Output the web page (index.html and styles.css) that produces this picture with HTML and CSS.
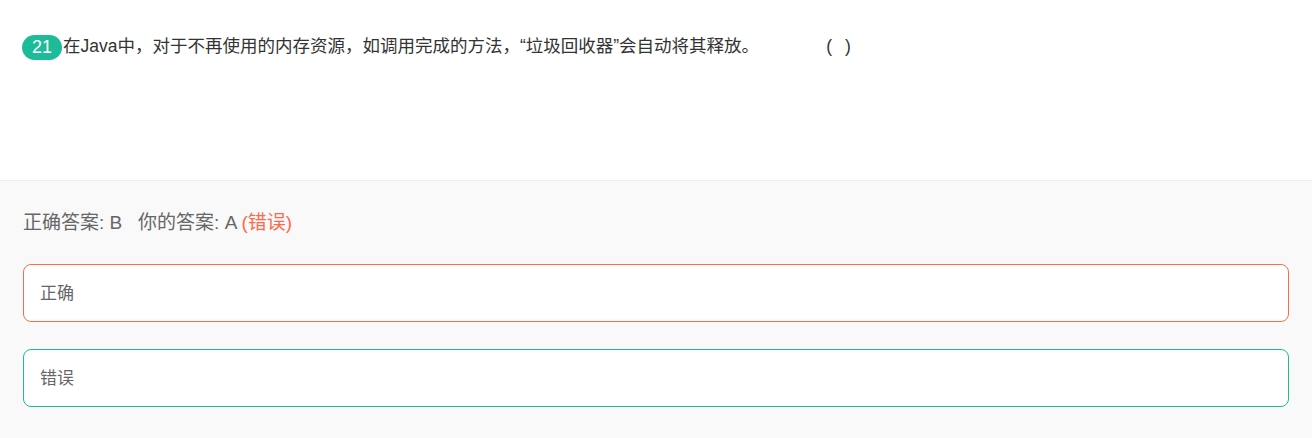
FILE: index.html
```html
<!DOCTYPE html>
<html lang="zh">
<head>
<meta charset="utf-8">
<link rel="stylesheet" href="styles.css">
</head>
<body>
<div class="question">
  <div class="stem"><span class="num">21</span><span class="title">在Java中，对于不再使用的内存资源，如调用完成的方法，“垃圾回收器”会自动将其释放。<span class="paren open">(</span><span class="paren close">)</span></span></div>
</div>
<div class="answer">
  <div class="result">正确答案: B&nbsp;&nbsp;&nbsp;你的答案: A <span class="wrong">(错误)</span></div>
  <div class="option opt-red">正确</div>
  <div class="option opt-green">错误</div>
</div>
</body>
</html>
```
FILE: styles.css
```css
html, body {
  margin: 0;
  padding: 0;
  background: #f9f9f9;
}
body {
  font-family: "Liberation Sans", "Noto Sans CJK SC", sans-serif;
  color: #333;
}
.question {
  background: #fff;
  height: 181px;
  border-bottom: 1px solid #eeeeee;
  box-sizing: border-box;
  padding: 34px 22px 0;
}
.stem {
  display: flex;
  align-items: center;
  font-size: 17.5px;
  line-height: 24px;
}
.num {
  display: inline-flex;
  align-items: center;
  justify-content: center;
  flex: none;
  width: 40px;
  height: 25px;
  border-radius: 13px;
  background: #1dbc98;
  color: #fff;
  font-size: 18px;
  margin-right: 1px;
}
.title {
  color: #333;
  white-space: pre;
  margin-bottom: 2px;
}
.paren {
  display: inline-block;
}
.paren.open {
  margin-left: 67px;
}
.paren.close {
  margin-left: 13px;
}
.answer {
  padding: 30px 23px 0;
}
.result {
  font-size: 19px;
  line-height: 24px;
  color: #666;
  margin-bottom: 29px;
}
.wrong {
  color: #ff6a4d;
}
.option {
  background: #fff;
  border-radius: 8px;
  height: 58px;
  box-sizing: border-box;
  padding: 0 16px 3px;
  display: flex;
  align-items: center;
  font-family: "Noto Sans CJK SC", sans-serif;
  font-size: 17px;
  color: #666;
  margin-bottom: 27px;
}
.option:last-child {
  margin-bottom: 0;
}
.opt-red {
  border: 1px solid #ff6a4d;
}
.opt-green {
  border: 1px solid #1dbc98;
}
```
